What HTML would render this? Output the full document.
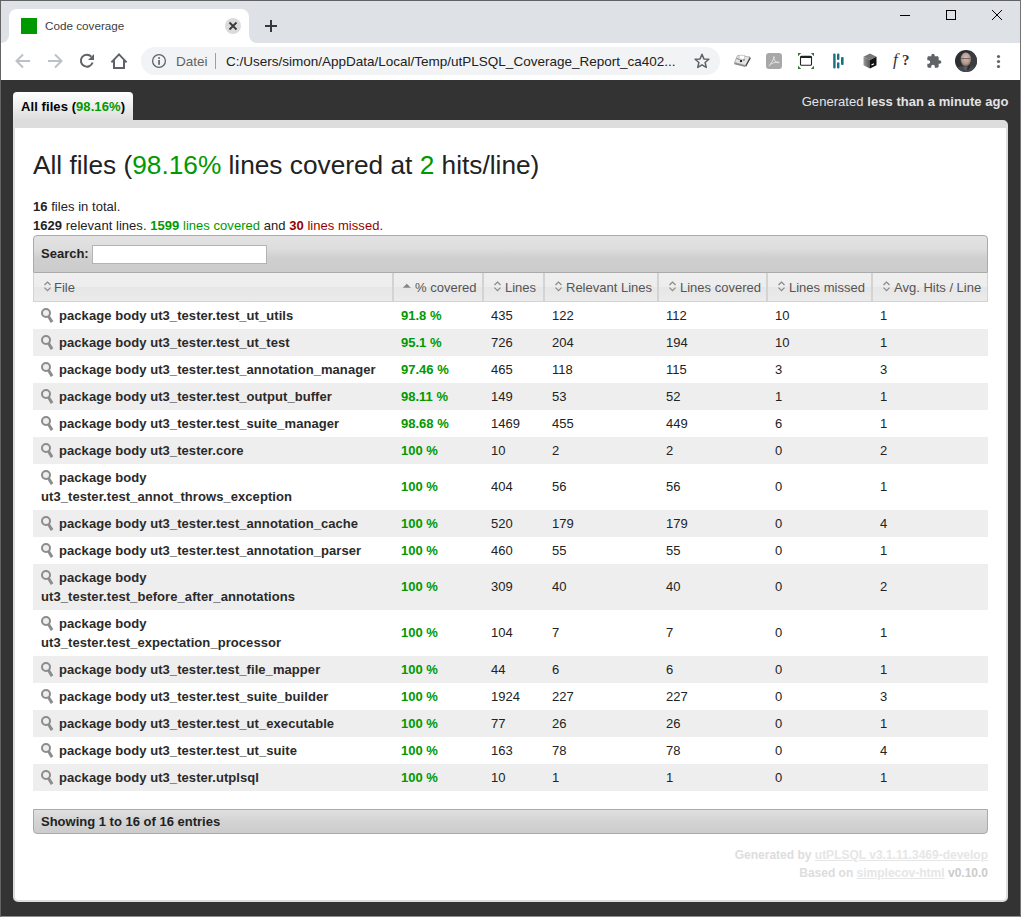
<!DOCTYPE html>
<html><head><meta charset="utf-8">
<style>
*{box-sizing:border-box}
html,body{margin:0;padding:0}
body{width:1021px;height:917px;overflow:hidden;position:relative;background:#333;font-family:"Liberation Sans",sans-serif}
.abs{position:absolute}
/* chrome frame */
#tabstrip{position:absolute;left:0;top:0;width:1021px;height:43px;background:#dee1e6}
#toolbar{position:absolute;left:0;top:43px;width:1021px;height:37px;background:#fff}
#bl{position:absolute;left:0;top:0;width:1px;height:917px;background:#646464;z-index:50}
#bt{position:absolute;left:0;top:0;width:1021px;height:1px;background:#606164;z-index:50}
#br{position:absolute;left:1020px;top:0;width:1px;height:917px;background:#747474;z-index:50}
#tab{position:absolute;left:9px;top:9px;width:240px;height:34px;background:#fff;border-radius:8px 8px 0 0}
#tab:before,#tab:after{content:"";position:absolute;bottom:0;width:8px;height:8px;background:transparent}
#tab:before{left:-8px;border-bottom-right-radius:8px;box-shadow:4px 4px 0 4px #fff}
#tab:after{right:-8px;border-bottom-left-radius:8px;box-shadow:-4px 4px 0 4px #fff}
#favicon{position:absolute;left:21px;top:18px;width:16px;height:16px;background:#009900}
#tabtitle{position:absolute;left:45px;top:18px;font-size:11.7px;color:#3c4043;line-height:16px;white-space:nowrap}
#omni{position:absolute;left:141px;top:47px;width:579px;height:28px;background:#f1f3f4;border-radius:14px}
#url{position:absolute;left:226px;top:53px;font-size:13.5px;color:#202124;line-height:18px;white-space:nowrap}
#datei{position:absolute;left:176px;top:53px;font-size:13.5px;color:#5f6368;line-height:18px}
#sep{position:absolute;left:215px;top:53px;width:1px;height:16px;background:#9aa0a6}
/* page */
#pagetab{position:absolute;left:13px;top:92px;width:120px;height:28px;border-radius:4px 4px 0 0;background:linear-gradient(#fff,#ddd);font-size:13px;font-weight:bold;color:#000;padding:7px 0 0 8px;white-space:nowrap;letter-spacing:0.08px}
.green{color:#009900}
.red{color:#990000}
#timestamp{position:absolute;right:12.5px;letter-spacing:0.05px;top:94px;font-size:13px;color:#e4e4e4;white-space:nowrap}
#card{position:absolute;left:13px;top:120px;width:995px;height:782px;background:#fff;border:2px solid #ddd;border-top:8px solid #ddd;border-radius:0 5px 5px 5px}
h2{position:absolute;left:33px;top:147px;margin:0;font-size:26.25px;font-weight:normal;color:#222;white-space:nowrap;line-height:36px}
#stats{position:absolute;left:33px;top:197px;font-size:13px;line-height:19px;color:#222;white-space:nowrap;letter-spacing:0.04px}

#search{position:absolute;left:33px;top:235px;width:955px;height:38px;border:1px solid #aaa;border-radius:4px 4px 0 0;background:linear-gradient(#e3e3e3 0%,#dddddd 35%,#cfcfcf 62%,#cccccc 100%);}
#search label{position:absolute;left:7px;top:10px;font-size:13px;font-weight:bold;color:#222;line-height:15px}
#search .inp{position:absolute;left:58px;top:9px;width:175px;height:19px;background:#fff;border:1px solid #b3b3b3}
.th{position:absolute;top:273px;height:29px;background:linear-gradient(#efefef 0,#ededed 50%,#e6e6e6 50%,#ebebeb 100%);border-bottom:1px solid #d3d3d3;font-size:13px;color:#555;white-space:nowrap;line-height:15px;padding-top:7px}
.th .si{position:absolute;left:11px;top:8px}
.th span{position:absolute;left:22px;top:7px}
.th.first{border-left:1px solid #d3d3d3}
.th.first .si{left:10px}
.th.first span{left:20px}
.th.last{border-right:1px solid #d3d3d3}
.td.up{padding-bottom:2px}
.thdiv{position:absolute;top:273px;width:2px;height:28px;background:#d3d3d3}
.tr{position:absolute;left:33px;width:955px;background:#fff}
.tr.even{background:#eee}
.td{position:absolute;top:0;display:flex;align-items:center;padding:0 8px;font-size:13px;color:#222;line-height:19px;white-space:nowrap}
.fl,.fl2{font-weight:bold;color:#2a2a2a;letter-spacing:0.065px}
.fl{position:relative;padding-left:18px}
.mag{position:absolute;left:0;top:0px}
#footbar{position:absolute;left:33px;top:809px;width:955px;height:25px;border:1px solid #aaa;border-radius:0 0 4px 4px;background:linear-gradient(#e0e0e0 0%,#d4d4d4 45%,#cccccc 100%);font-size:13px;font-weight:bold;color:#222;padding:4px 0 0 7px;line-height:15px}
#footer{position:absolute;right:33px;top:846px;text-align:right;font-size:12px;font-weight:bold;color:#ddd;line-height:18px;white-space:nowrap}
#footer a{color:#e6e6e6;text-decoration:underline;text-underline-offset:1px}
#footer .v{color:#ccc}
</style></head><body>
<div id="tabstrip"></div>
<div id="tab"></div>
<div id="favicon"></div>
<div id="tabtitle">Code coverage</div>
<div id="toolbar"></div>
<div id="omni"></div>
<div id="datei">Datei</div>
<div id="sep"></div>
<div id="url">C:/Users/simon/AppData/Local/Temp/utPLSQL_Coverage_Report_ca402...</div>


<!-- tab close + new tab -->
<svg class="abs" style="left:225px;top:18px" width="16" height="16" viewBox="0 0 16 16"><circle cx="8" cy="8" r="8" fill="#dbdbdb"/><path d="M4.5 4.5L11.5 11.5M11.5 4.5L4.5 11.5" stroke="#35383c" stroke-width="1.8"/></svg>
<svg class="abs" style="left:264px;top:19px" width="14" height="14" viewBox="0 0 14 14"><path d="M7 1V13M1 7H13" stroke="#35383c" stroke-width="2"/></svg>
<!-- window controls -->
<svg class="abs" style="left:895px;top:5px" width="20" height="20" viewBox="0 0 20 20"><path d="M5 10.5H15" stroke="#000" stroke-width="1"/></svg>
<svg class="abs" style="left:941px;top:5px" width="20" height="20" viewBox="0 0 20 20"><rect x="5.5" y="5.5" width="9" height="9" fill="none" stroke="#000" stroke-width="1"/></svg>
<svg class="abs" style="left:987px;top:5px" width="20" height="20" viewBox="0 0 20 20"><path d="M5 5L15 15M15 5L5 15" stroke="#000" stroke-width="1"/></svg>
<!-- nav -->
<svg class="abs" style="left:13px;top:51px" width="20" height="20" viewBox="0 0 20 20"><path d="M17 10H4M10 3.5L3.5 10L10 16.5" fill="none" stroke="#bdc1c6" stroke-width="2"/></svg>
<svg class="abs" style="left:45px;top:51px" width="20" height="20" viewBox="0 0 20 20"><path d="M3 10H16M10 3.5L16.5 10L10 16.5" fill="none" stroke="#bdc1c6" stroke-width="2"/></svg>
<svg class="abs" style="left:77px;top:51px" width="20" height="20" viewBox="0 0 20 20"><path d="M15.6 11.5A6 6 0 1 1 14.3 5.6" fill="none" stroke="#5f6368" stroke-width="2"/><path d="M17 3V9H11Z" fill="#5f6368"/></svg>
<svg class="abs" style="left:109px;top:51px" width="20" height="20" viewBox="0 0 20 20"><path d="M2.4 11.4L10 3.4L17.6 11.4M5 9.2V17H15V9.2" fill="none" stroke="#5f6368" stroke-width="2" stroke-linejoin="miter"/></svg>
<!-- omnibox icons -->
<svg class="abs" style="left:151px;top:53px" width="16" height="16" viewBox="0 0 16 16"><circle cx="8" cy="8" r="6.4" fill="none" stroke="#5f6368" stroke-width="1.3"/><rect x="7.2" y="7" width="1.7" height="4.8" fill="#5f6368"/><rect x="7.2" y="4.2" width="1.7" height="1.7" fill="#5f6368"/></svg>
<svg class="abs" style="left:693px;top:52px" width="18" height="18" viewBox="0 0 18 18"><path d="M9 2.2L10.9 6.9L15.9 7.3L12.1 10.5L13.3 15.4L9 12.8L4.7 15.4L5.9 10.5L2.1 7.3L7.1 6.9Z" fill="none" stroke="#5f6368" stroke-width="1.5" stroke-linejoin="round"/></svg>
<!-- extensions -->
<svg class="abs" style="left:733px;top:53px" width="19" height="16" viewBox="0 0 19 16"><path d="M1.5 9.5L4.5 2.5L17 4L12.5 12.5Z" fill="#e4e4e4" stroke="#9a9a9a" stroke-width="0.7"/><path d="M1.5 9.5L12.5 12.5L12.2 14L1.3 11.3Z" fill="#8a8a8a"/><path d="M17 4L17.6 5.5L13 14L12.5 12.5Z" fill="#3a3a3a"/><path d="M6.5 2.2L12 2.4L11 6.5L6 6Z" fill="#fff" stroke="#b0b0b0" stroke-width="0.6"/><path d="M3.5 5.5L6 6.2L6.5 7" fill="none" stroke="#777" stroke-width="0.9"/><circle cx="8" cy="8" r="1.2" fill="#2a2a2a"/><path d="M10 7.2L12 6.8" stroke="#555" stroke-width="0.8"/></svg>
<svg class="abs" style="left:766px;top:53px" width="16" height="16" viewBox="0 0 16 16"><rect x="0" y="0" width="16" height="16" rx="3" fill="#a8a8a8"/><path d="M3 13C5 10.5 6.5 8 8 5.5C8.5 4.5 8.3 3.2 7.8 3.6C7.2 4.2 7.9 6.5 9 8C10 9.2 11.5 9.8 13 9.8C13.5 9.8 13 9 12 9C9.5 9 6 10 4.5 11.5" fill="none" stroke="#e8e8e8" stroke-width="0.9"/></svg>
<svg class="abs" style="left:798px;top:53px" width="16" height="16" viewBox="0 0 16 16"><path d="M0 3.2V0H3.2Z M12.8 0H16V3.2Z M0 12.8V16H3.2Z M16 12.8V16H12.8Z" fill="#2a7a2a"/><rect x="2.5" y="3.4" width="11" height="8.8" rx="1" fill="none" stroke="#222" stroke-width="1.1"/><rect x="2.5" y="3.2" width="11" height="1.8" fill="#222"/></svg>
<svg class="abs" style="left:832px;top:53px" width="13" height="16" viewBox="0 0 13 16"><rect x="1.2" y="0.6" width="2.4" height="14.8" rx="1" fill="#1b6f82"/><rect x="5" y="0.6" width="2.4" height="6.4" rx="1" fill="#1b6f82"/><rect x="5" y="9.2" width="2.4" height="6.2" rx="1" fill="#1b6f82"/><rect x="9" y="4" width="2.6" height="8" rx="1" fill="#1b6f82"/></svg>
<svg class="abs" style="left:862px;top:53px" width="16" height="16" viewBox="0 0 16 16"><defs><linearGradient id="cg" x1="0" x2="1" y1="0" y2="0"><stop offset="0" stop-color="#9a9a9a"/><stop offset="1" stop-color="#555"/></linearGradient></defs><path d="M8 0.5L14.5 3.8L8 7L1.5 3.8Z" fill="#777"/><path d="M1.5 3.8L8 7V15.5L1.5 12.2Z" fill="url(#cg)"/><path d="M8 7L14.5 3.8V12.2L8 15.5Z" fill="#111"/><path d="M9.5 12L12 10.8" stroke="#fff" stroke-width="1.2"/></svg>
<div class="abs" style="left:893px;top:50px;font-family:'Liberation Serif',serif;font-style:italic;font-size:17px;color:#333;line-height:20px">f</div><div class="abs" style="left:902px;top:51px;font-weight:bold;font-family:'Liberation Serif',serif;font-size:15px;color:#333;line-height:18px">?</div>
<svg class="abs" style="left:926px;top:53px" width="16" height="16" viewBox="0 0 24 24"><path d="M20.5 11H19V7c0-1.1-.9-2-2-2h-4V3.5C13 2.12 11.88 1 10.5 1S8 2.12 8 3.5V5H4c-1.1 0-1.99.9-1.99 2v3.8H3.5c1.49 0 2.7 1.21 2.7 2.7s-1.21 2.7-2.7 2.7H2V20c0 1.1.9 2 2 2h3.8v-1.5c0-1.49 1.21-2.7 2.7-2.7 1.49 0 2.7 1.21 2.7 2.7V22H17c1.1 0 2-.9 2-2v-4h1.5c1.38 0 2.5-1.120 2.5-2.5S21.88 11 20.5 11z" fill="#5f6368"/></svg>
<svg class="abs" style="left:955px;top:50px" width="22" height="22" viewBox="0 0 22 22"><defs><clipPath id="av"><circle cx="11" cy="11" r="11"/></clipPath><radialGradient id="fg" cx="0.5" cy="0.4" r="0.6"><stop offset="0" stop-color="#d9c0b4"/><stop offset="0.7" stop-color="#b0958a"/><stop offset="1" stop-color="#6e5a55"/></radialGradient></defs><g clip-path="url(#av)"><rect width="22" height="22" fill="#2b2f33"/><rect x="15" y="0" width="7" height="22" fill="#3a3e42"/><ellipse cx="10.8" cy="9.5" rx="5.2" ry="7" fill="url(#fg)"/><path d="M6 8.6H15.5" stroke="#6a6260" stroke-width="1"/><path d="M0 23L2 17.5Q6 15.5 10 17L13 20L16 16.5Q20 16 22 19V23Z" fill="#44494e"/><path d="M8 16.5L10.5 21L13 16.8" fill="#5a5f64"/></g></svg>
<svg class="abs" style="left:995px;top:54px" width="7" height="15" viewBox="0 0 7 15"><circle cx="3.5" cy="2.5" r="1.6" fill="#5f6368"/><circle cx="3.5" cy="7.5" r="1.6" fill="#5f6368"/><circle cx="3.5" cy="12.5" r="1.6" fill="#5f6368"/></svg>
<div id="pagetab">All files (<span class="green">98.16%</span>)</div>
<div id="timestamp">Generated <b>less than a minute ago</b></div>
<div id="card"></div>
<h2>All files (<span class="green">98.16%</span> lines covered at <span class="green">2</span> hits/line)</h2>
<div id="stats"><b>16</b> files in total.<br><b>1629</b> relevant lines. <span class="green"><b>1599</b> lines covered</span> and <span class="red"><b>30</b> lines missed.</span></div>

<div id="search"><label>Search:</label><div class="inp"></div></div>
<div class="th first" style="left:33px;width:360px"><svg class="si" width="7" height="11" viewBox="0 0 7 11"><path d="M0.5 4 L3.5 1 L6.5 4 M0.5 6.6 L3.5 9.6 L6.5 6.6" fill="none" stroke="#888" stroke-width="1.2"/></svg><span>File</span></div>
<div class="th" style="left:393px;width:90px"><svg class="si tri" width="7" height="11" viewBox="0 0 7 11" style="overflow:visible"><path d="M-1.2 6.8 L2.8 2.8 L6.8 6.8 Z" fill="#858585"/></svg><span>% covered</span></div>
<div class="th" style="left:483px;width:61px"><svg class="si" width="7" height="11" viewBox="0 0 7 11"><path d="M0.5 4 L3.5 1 L6.5 4 M0.5 6.6 L3.5 9.6 L6.5 6.6" fill="none" stroke="#888" stroke-width="1.2"/></svg><span>Lines</span></div>
<div class="th" style="left:544px;width:114px"><svg class="si" width="7" height="11" viewBox="0 0 7 11"><path d="M0.5 4 L3.5 1 L6.5 4 M0.5 6.6 L3.5 9.6 L6.5 6.6" fill="none" stroke="#888" stroke-width="1.2"/></svg><span>Relevant Lines</span></div>
<div class="th" style="left:658px;width:109px"><svg class="si" width="7" height="11" viewBox="0 0 7 11"><path d="M0.5 4 L3.5 1 L6.5 4 M0.5 6.6 L3.5 9.6 L6.5 6.6" fill="none" stroke="#888" stroke-width="1.2"/></svg><span>Lines covered</span></div>
<div class="th" style="left:767px;width:105px"><svg class="si" width="7" height="11" viewBox="0 0 7 11"><path d="M0.5 4 L3.5 1 L6.5 4 M0.5 6.6 L3.5 9.6 L6.5 6.6" fill="none" stroke="#888" stroke-width="1.2"/></svg><span>Lines missed</span></div>
<div class="th last" style="left:872px;width:116px"><svg class="si" width="7" height="11" viewBox="0 0 7 11"><path d="M0.5 4 L3.5 1 L6.5 4 M0.5 6.6 L3.5 9.6 L6.5 6.6" fill="none" stroke="#888" stroke-width="1.2"/></svg><span>Avg. Hits / Line</span></div>
<div class="thdiv" style="left:392px"></div>
<div class="thdiv" style="left:482px"></div>
<div class="thdiv" style="left:543px"></div>
<div class="thdiv" style="left:657px"></div>
<div class="thdiv" style="left:766px"></div>
<div class="thdiv" style="left:871px"></div>
<div class="tr" style="top:302px;height:27px">
<div class="td" style="left:0px;width:360px;height:27px"><div class="in"><span class="fl"><svg class="mag" width="14" height="16" viewBox="0 0 14 16"><circle cx="5" cy="5" r="4" fill="#eee" stroke="#8c8c8c" stroke-width="2"/><path d="M7.5 8.3 L11.1 14.1" stroke="#8c8c8c" stroke-width="3" stroke-linecap="butt"/></svg>package body ut3_tester.test_ut_utils</span></div></div>
<div class="td" style="left:360px;width:90px;height:27px"><div class="in"><b class="green">91.8 %</b></div></div>
<div class="td" style="left:450px;width:61px;height:27px"><div class="in">435</div></div>
<div class="td" style="left:511px;width:114px;height:27px"><div class="in">122</div></div>
<div class="td" style="left:625px;width:109px;height:27px"><div class="in">112</div></div>
<div class="td" style="left:734px;width:105px;height:27px"><div class="in">10</div></div>
<div class="td" style="left:839px;width:116px;height:27px"><div class="in">1</div></div>
</div>
<div class="tr even" style="top:329px;height:27px">
<div class="td" style="left:0px;width:360px;height:27px"><div class="in"><span class="fl"><svg class="mag" width="14" height="16" viewBox="0 0 14 16"><circle cx="5" cy="5" r="4" fill="#eee" stroke="#8c8c8c" stroke-width="2"/><path d="M7.5 8.3 L11.1 14.1" stroke="#8c8c8c" stroke-width="3" stroke-linecap="butt"/></svg>package body ut3_tester.test_ut_test</span></div></div>
<div class="td" style="left:360px;width:90px;height:27px"><div class="in"><b class="green">95.1 %</b></div></div>
<div class="td" style="left:450px;width:61px;height:27px"><div class="in">726</div></div>
<div class="td" style="left:511px;width:114px;height:27px"><div class="in">204</div></div>
<div class="td" style="left:625px;width:109px;height:27px"><div class="in">194</div></div>
<div class="td" style="left:734px;width:105px;height:27px"><div class="in">10</div></div>
<div class="td" style="left:839px;width:116px;height:27px"><div class="in">1</div></div>
</div>
<div class="tr" style="top:356px;height:27px">
<div class="td" style="left:0px;width:360px;height:27px"><div class="in"><span class="fl"><svg class="mag" width="14" height="16" viewBox="0 0 14 16"><circle cx="5" cy="5" r="4" fill="#eee" stroke="#8c8c8c" stroke-width="2"/><path d="M7.5 8.3 L11.1 14.1" stroke="#8c8c8c" stroke-width="3" stroke-linecap="butt"/></svg>package body ut3_tester.test_annotation_manager</span></div></div>
<div class="td" style="left:360px;width:90px;height:27px"><div class="in"><b class="green">97.46 %</b></div></div>
<div class="td" style="left:450px;width:61px;height:27px"><div class="in">465</div></div>
<div class="td" style="left:511px;width:114px;height:27px"><div class="in">118</div></div>
<div class="td" style="left:625px;width:109px;height:27px"><div class="in">115</div></div>
<div class="td" style="left:734px;width:105px;height:27px"><div class="in">3</div></div>
<div class="td" style="left:839px;width:116px;height:27px"><div class="in">3</div></div>
</div>
<div class="tr even" style="top:383px;height:27px">
<div class="td" style="left:0px;width:360px;height:27px"><div class="in"><span class="fl"><svg class="mag" width="14" height="16" viewBox="0 0 14 16"><circle cx="5" cy="5" r="4" fill="#eee" stroke="#8c8c8c" stroke-width="2"/><path d="M7.5 8.3 L11.1 14.1" stroke="#8c8c8c" stroke-width="3" stroke-linecap="butt"/></svg>package body ut3_tester.test_output_buffer</span></div></div>
<div class="td" style="left:360px;width:90px;height:27px"><div class="in"><b class="green">98.11 %</b></div></div>
<div class="td" style="left:450px;width:61px;height:27px"><div class="in">149</div></div>
<div class="td" style="left:511px;width:114px;height:27px"><div class="in">53</div></div>
<div class="td" style="left:625px;width:109px;height:27px"><div class="in">52</div></div>
<div class="td" style="left:734px;width:105px;height:27px"><div class="in">1</div></div>
<div class="td" style="left:839px;width:116px;height:27px"><div class="in">1</div></div>
</div>
<div class="tr" style="top:410px;height:27px">
<div class="td" style="left:0px;width:360px;height:27px"><div class="in"><span class="fl"><svg class="mag" width="14" height="16" viewBox="0 0 14 16"><circle cx="5" cy="5" r="4" fill="#eee" stroke="#8c8c8c" stroke-width="2"/><path d="M7.5 8.3 L11.1 14.1" stroke="#8c8c8c" stroke-width="3" stroke-linecap="butt"/></svg>package body ut3_tester.test_suite_manager</span></div></div>
<div class="td" style="left:360px;width:90px;height:27px"><div class="in"><b class="green">98.68 %</b></div></div>
<div class="td" style="left:450px;width:61px;height:27px"><div class="in">1469</div></div>
<div class="td" style="left:511px;width:114px;height:27px"><div class="in">455</div></div>
<div class="td" style="left:625px;width:109px;height:27px"><div class="in">449</div></div>
<div class="td" style="left:734px;width:105px;height:27px"><div class="in">6</div></div>
<div class="td" style="left:839px;width:116px;height:27px"><div class="in">1</div></div>
</div>
<div class="tr even" style="top:437px;height:27px">
<div class="td" style="left:0px;width:360px;height:27px"><div class="in"><span class="fl"><svg class="mag" width="14" height="16" viewBox="0 0 14 16"><circle cx="5" cy="5" r="4" fill="#eee" stroke="#8c8c8c" stroke-width="2"/><path d="M7.5 8.3 L11.1 14.1" stroke="#8c8c8c" stroke-width="3" stroke-linecap="butt"/></svg>package body ut3_tester.core</span></div></div>
<div class="td" style="left:360px;width:90px;height:27px"><div class="in"><b class="green">100 %</b></div></div>
<div class="td" style="left:450px;width:61px;height:27px"><div class="in">10</div></div>
<div class="td" style="left:511px;width:114px;height:27px"><div class="in">2</div></div>
<div class="td" style="left:625px;width:109px;height:27px"><div class="in">2</div></div>
<div class="td" style="left:734px;width:105px;height:27px"><div class="in">0</div></div>
<div class="td" style="left:839px;width:116px;height:27px"><div class="in">2</div></div>
</div>
<div class="tr" style="top:464px;height:46px">
<div class="td" style="left:0px;width:360px;height:46px"><div class="in"><span class="fl"><svg class="mag" width="14" height="16" viewBox="0 0 14 16"><circle cx="5" cy="5" r="4" fill="#eee" stroke="#8c8c8c" stroke-width="2"/><path d="M7.5 8.3 L11.1 14.1" stroke="#8c8c8c" stroke-width="3" stroke-linecap="butt"/></svg>package body</span><br><span class="fl2">ut3_tester.test_annot_throws_exception</span></div></div>
<div class="td up" style="left:360px;width:90px;height:46px"><div class="in"><b class="green">100 %</b></div></div>
<div class="td up" style="left:450px;width:61px;height:46px"><div class="in">404</div></div>
<div class="td up" style="left:511px;width:114px;height:46px"><div class="in">56</div></div>
<div class="td up" style="left:625px;width:109px;height:46px"><div class="in">56</div></div>
<div class="td up" style="left:734px;width:105px;height:46px"><div class="in">0</div></div>
<div class="td up" style="left:839px;width:116px;height:46px"><div class="in">1</div></div>
</div>
<div class="tr even" style="top:510px;height:27px">
<div class="td" style="left:0px;width:360px;height:27px"><div class="in"><span class="fl"><svg class="mag" width="14" height="16" viewBox="0 0 14 16"><circle cx="5" cy="5" r="4" fill="#eee" stroke="#8c8c8c" stroke-width="2"/><path d="M7.5 8.3 L11.1 14.1" stroke="#8c8c8c" stroke-width="3" stroke-linecap="butt"/></svg>package body ut3_tester.test_annotation_cache</span></div></div>
<div class="td" style="left:360px;width:90px;height:27px"><div class="in"><b class="green">100 %</b></div></div>
<div class="td" style="left:450px;width:61px;height:27px"><div class="in">520</div></div>
<div class="td" style="left:511px;width:114px;height:27px"><div class="in">179</div></div>
<div class="td" style="left:625px;width:109px;height:27px"><div class="in">179</div></div>
<div class="td" style="left:734px;width:105px;height:27px"><div class="in">0</div></div>
<div class="td" style="left:839px;width:116px;height:27px"><div class="in">4</div></div>
</div>
<div class="tr" style="top:537px;height:27px">
<div class="td" style="left:0px;width:360px;height:27px"><div class="in"><span class="fl"><svg class="mag" width="14" height="16" viewBox="0 0 14 16"><circle cx="5" cy="5" r="4" fill="#eee" stroke="#8c8c8c" stroke-width="2"/><path d="M7.5 8.3 L11.1 14.1" stroke="#8c8c8c" stroke-width="3" stroke-linecap="butt"/></svg>package body ut3_tester.test_annotation_parser</span></div></div>
<div class="td" style="left:360px;width:90px;height:27px"><div class="in"><b class="green">100 %</b></div></div>
<div class="td" style="left:450px;width:61px;height:27px"><div class="in">460</div></div>
<div class="td" style="left:511px;width:114px;height:27px"><div class="in">55</div></div>
<div class="td" style="left:625px;width:109px;height:27px"><div class="in">55</div></div>
<div class="td" style="left:734px;width:105px;height:27px"><div class="in">0</div></div>
<div class="td" style="left:839px;width:116px;height:27px"><div class="in">1</div></div>
</div>
<div class="tr even" style="top:564px;height:46px">
<div class="td" style="left:0px;width:360px;height:46px"><div class="in"><span class="fl"><svg class="mag" width="14" height="16" viewBox="0 0 14 16"><circle cx="5" cy="5" r="4" fill="#eee" stroke="#8c8c8c" stroke-width="2"/><path d="M7.5 8.3 L11.1 14.1" stroke="#8c8c8c" stroke-width="3" stroke-linecap="butt"/></svg>package body</span><br><span class="fl2">ut3_tester.test_before_after_annotations</span></div></div>
<div class="td up" style="left:360px;width:90px;height:46px"><div class="in"><b class="green">100 %</b></div></div>
<div class="td up" style="left:450px;width:61px;height:46px"><div class="in">309</div></div>
<div class="td up" style="left:511px;width:114px;height:46px"><div class="in">40</div></div>
<div class="td up" style="left:625px;width:109px;height:46px"><div class="in">40</div></div>
<div class="td up" style="left:734px;width:105px;height:46px"><div class="in">0</div></div>
<div class="td up" style="left:839px;width:116px;height:46px"><div class="in">2</div></div>
</div>
<div class="tr" style="top:610px;height:46px">
<div class="td" style="left:0px;width:360px;height:46px"><div class="in"><span class="fl"><svg class="mag" width="14" height="16" viewBox="0 0 14 16"><circle cx="5" cy="5" r="4" fill="#eee" stroke="#8c8c8c" stroke-width="2"/><path d="M7.5 8.3 L11.1 14.1" stroke="#8c8c8c" stroke-width="3" stroke-linecap="butt"/></svg>package body</span><br><span class="fl2">ut3_tester.test_expectation_processor</span></div></div>
<div class="td up" style="left:360px;width:90px;height:46px"><div class="in"><b class="green">100 %</b></div></div>
<div class="td up" style="left:450px;width:61px;height:46px"><div class="in">104</div></div>
<div class="td up" style="left:511px;width:114px;height:46px"><div class="in">7</div></div>
<div class="td up" style="left:625px;width:109px;height:46px"><div class="in">7</div></div>
<div class="td up" style="left:734px;width:105px;height:46px"><div class="in">0</div></div>
<div class="td up" style="left:839px;width:116px;height:46px"><div class="in">1</div></div>
</div>
<div class="tr even" style="top:656px;height:27px">
<div class="td" style="left:0px;width:360px;height:27px"><div class="in"><span class="fl"><svg class="mag" width="14" height="16" viewBox="0 0 14 16"><circle cx="5" cy="5" r="4" fill="#eee" stroke="#8c8c8c" stroke-width="2"/><path d="M7.5 8.3 L11.1 14.1" stroke="#8c8c8c" stroke-width="3" stroke-linecap="butt"/></svg>package body ut3_tester.test_file_mapper</span></div></div>
<div class="td" style="left:360px;width:90px;height:27px"><div class="in"><b class="green">100 %</b></div></div>
<div class="td" style="left:450px;width:61px;height:27px"><div class="in">44</div></div>
<div class="td" style="left:511px;width:114px;height:27px"><div class="in">6</div></div>
<div class="td" style="left:625px;width:109px;height:27px"><div class="in">6</div></div>
<div class="td" style="left:734px;width:105px;height:27px"><div class="in">0</div></div>
<div class="td" style="left:839px;width:116px;height:27px"><div class="in">1</div></div>
</div>
<div class="tr" style="top:683px;height:27px">
<div class="td" style="left:0px;width:360px;height:27px"><div class="in"><span class="fl"><svg class="mag" width="14" height="16" viewBox="0 0 14 16"><circle cx="5" cy="5" r="4" fill="#eee" stroke="#8c8c8c" stroke-width="2"/><path d="M7.5 8.3 L11.1 14.1" stroke="#8c8c8c" stroke-width="3" stroke-linecap="butt"/></svg>package body ut3_tester.test_suite_builder</span></div></div>
<div class="td" style="left:360px;width:90px;height:27px"><div class="in"><b class="green">100 %</b></div></div>
<div class="td" style="left:450px;width:61px;height:27px"><div class="in">1924</div></div>
<div class="td" style="left:511px;width:114px;height:27px"><div class="in">227</div></div>
<div class="td" style="left:625px;width:109px;height:27px"><div class="in">227</div></div>
<div class="td" style="left:734px;width:105px;height:27px"><div class="in">0</div></div>
<div class="td" style="left:839px;width:116px;height:27px"><div class="in">3</div></div>
</div>
<div class="tr even" style="top:710px;height:27px">
<div class="td" style="left:0px;width:360px;height:27px"><div class="in"><span class="fl"><svg class="mag" width="14" height="16" viewBox="0 0 14 16"><circle cx="5" cy="5" r="4" fill="#eee" stroke="#8c8c8c" stroke-width="2"/><path d="M7.5 8.3 L11.1 14.1" stroke="#8c8c8c" stroke-width="3" stroke-linecap="butt"/></svg>package body ut3_tester.test_ut_executable</span></div></div>
<div class="td" style="left:360px;width:90px;height:27px"><div class="in"><b class="green">100 %</b></div></div>
<div class="td" style="left:450px;width:61px;height:27px"><div class="in">77</div></div>
<div class="td" style="left:511px;width:114px;height:27px"><div class="in">26</div></div>
<div class="td" style="left:625px;width:109px;height:27px"><div class="in">26</div></div>
<div class="td" style="left:734px;width:105px;height:27px"><div class="in">0</div></div>
<div class="td" style="left:839px;width:116px;height:27px"><div class="in">1</div></div>
</div>
<div class="tr" style="top:737px;height:27px">
<div class="td" style="left:0px;width:360px;height:27px"><div class="in"><span class="fl"><svg class="mag" width="14" height="16" viewBox="0 0 14 16"><circle cx="5" cy="5" r="4" fill="#eee" stroke="#8c8c8c" stroke-width="2"/><path d="M7.5 8.3 L11.1 14.1" stroke="#8c8c8c" stroke-width="3" stroke-linecap="butt"/></svg>package body ut3_tester.test_ut_suite</span></div></div>
<div class="td" style="left:360px;width:90px;height:27px"><div class="in"><b class="green">100 %</b></div></div>
<div class="td" style="left:450px;width:61px;height:27px"><div class="in">163</div></div>
<div class="td" style="left:511px;width:114px;height:27px"><div class="in">78</div></div>
<div class="td" style="left:625px;width:109px;height:27px"><div class="in">78</div></div>
<div class="td" style="left:734px;width:105px;height:27px"><div class="in">0</div></div>
<div class="td" style="left:839px;width:116px;height:27px"><div class="in">4</div></div>
</div>
<div class="tr even" style="top:764px;height:27px">
<div class="td" style="left:0px;width:360px;height:27px"><div class="in"><span class="fl"><svg class="mag" width="14" height="16" viewBox="0 0 14 16"><circle cx="5" cy="5" r="4" fill="#eee" stroke="#8c8c8c" stroke-width="2"/><path d="M7.5 8.3 L11.1 14.1" stroke="#8c8c8c" stroke-width="3" stroke-linecap="butt"/></svg>package body ut3_tester.utplsql</span></div></div>
<div class="td" style="left:360px;width:90px;height:27px"><div class="in"><b class="green">100 %</b></div></div>
<div class="td" style="left:450px;width:61px;height:27px"><div class="in">10</div></div>
<div class="td" style="left:511px;width:114px;height:27px"><div class="in">1</div></div>
<div class="td" style="left:625px;width:109px;height:27px"><div class="in">1</div></div>
<div class="td" style="left:734px;width:105px;height:27px"><div class="in">0</div></div>
<div class="td" style="left:839px;width:116px;height:27px"><div class="in">1</div></div>
</div>
<div id="footbar">Showing 1 to 16 of 16 entries</div>
<div id="footer">Generated by <a>utPLSQL v3.1.11.3469-develop</a><br>Based on <a>simplecov-html</a> <span class="v">v0.10.0</span></div>
<div id="bb" style="position:absolute;left:0;top:916px;width:1021px;height:1px;background:#8d8d8d;z-index:50"></div><div id="bl"></div><div id="bt"></div><div id="br"></div>
</body></html>
